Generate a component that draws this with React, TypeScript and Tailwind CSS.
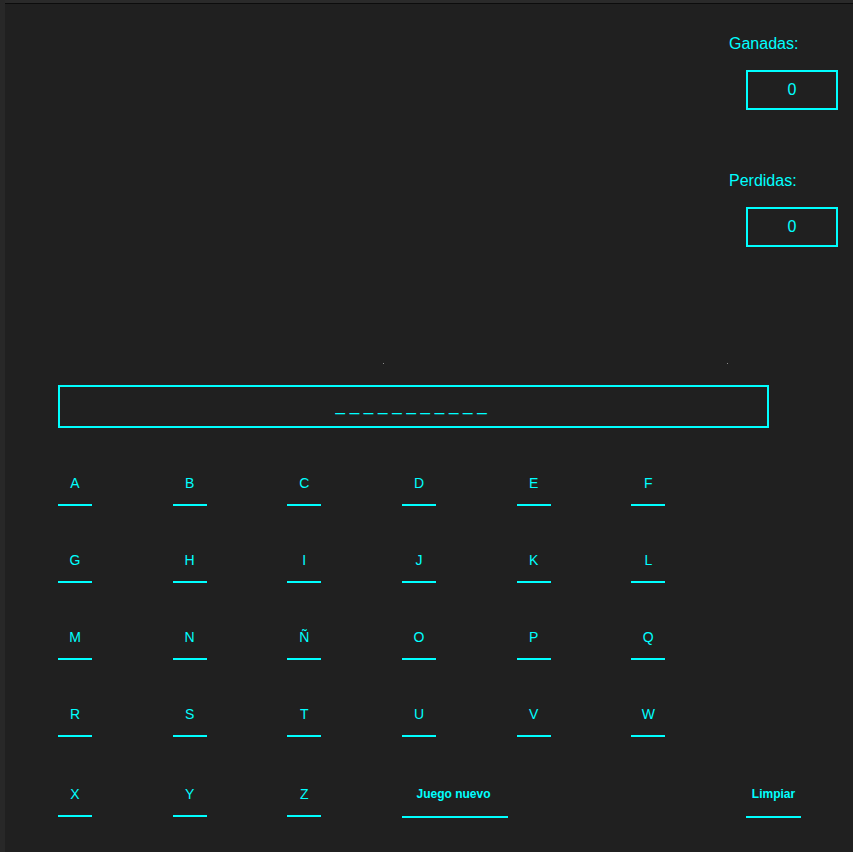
const letterRows = [
  ["A", "B", "C", "D", "E", "F"],
  ["G", "H", "I", "J", "K", "L"],
  ["M", "N", "Ñ", "O", "P", "Q"],
  ["R", "S", "T", "U", "V", "W"],
]

const palabra = "_ ".repeat(11)

function Letra({ l }: { l: string }) {
  return (
    <div className="w-[114.67px] shrink-0">
      <button className="block w-[34px] text-[14px] leading-4 pt-px pb-[13px] border-b-2 border-[#00ffff] text-[#00ffff]">
        {l}
      </button>
    </div>
  )
}

function Marcador({ titulo, valor }: { titulo: string; valor: number }) {
  return (
    <div className="flex flex-col">
      <span className="text-[16px] leading-[18px] text-[#00ffff]">{titulo}</span>
      <div className="mt-[17px] ml-auto w-[92px] h-[40px] border-2 border-[#00ffff] flex items-center justify-center text-[16px] text-[#00ffff]">
        {valor}
      </div>
    </div>
  )
}

export default function App() {
  return (
    <div
      className="min-h-screen flex bg-[#202020]"
      style={{ fontFamily: '"Liberation Sans", Arial, sans-serif' }}
    >
      <div className="w-[5px] shrink-0 bg-[#282828]" />
      <div className="flex-1 flex flex-col">
        <div className="h-[3px] bg-[#2a2a2a]" />
        <div className="h-px bg-[#0c0c0c]" />

        <div className="flex justify-end pr-[15px] mt-[31px]">
          <div className="w-[109px] flex flex-col gap-[62px]">
            <Marcador titulo="Ganadas:" valor={0} />
            <Marcador titulo="Perdidas:" valor={0} />
          </div>
        </div>

        <div className="mt-[116px] h-px flex">
          <span className="ml-[378px] w-px h-px bg-[#8a8a8a]" />
          <span className="ml-[343px] w-px h-px bg-[#8a8a8a]" />
        </div>

        <div className="mt-[21px] ml-[53px] w-[711px] h-[43px] border-2 border-[#00ffff] flex justify-center pt-[9px]">
          <span className="text-[17px] leading-5 whitespace-pre text-[#00ffff]">{palabra}</span>
        </div>

        <div className="ml-[53px] mt-[46px] flex flex-col gap-y-[45px]">
          {letterRows.map((fila, i) => (
            <div key={i} className="flex">
              {fila.map((l) => (
                <Letra key={l} l={l} />
              ))}
            </div>
          ))}
          <div className="flex items-start mt-[3px]">
            <Letra l="X" />
            <Letra l="Y" />
            <Letra l="Z" />
            <div className="w-[344px] shrink-0">
              <button className="block w-[106px] pr-[3px] text-[12px] font-bold leading-4 pt-px pb-[14px] border-b-2 border-[#00ffff] text-[#00ffff]">
                Juego nuevo
              </button>
            </div>
            <button className="block w-[55px] text-[12px] font-bold leading-4 pt-px pb-[14px] border-b-2 border-[#00ffff] text-[#00ffff]">
              Limpiar
            </button>
          </div>
        </div>
      </div>
    </div>
  )
}
